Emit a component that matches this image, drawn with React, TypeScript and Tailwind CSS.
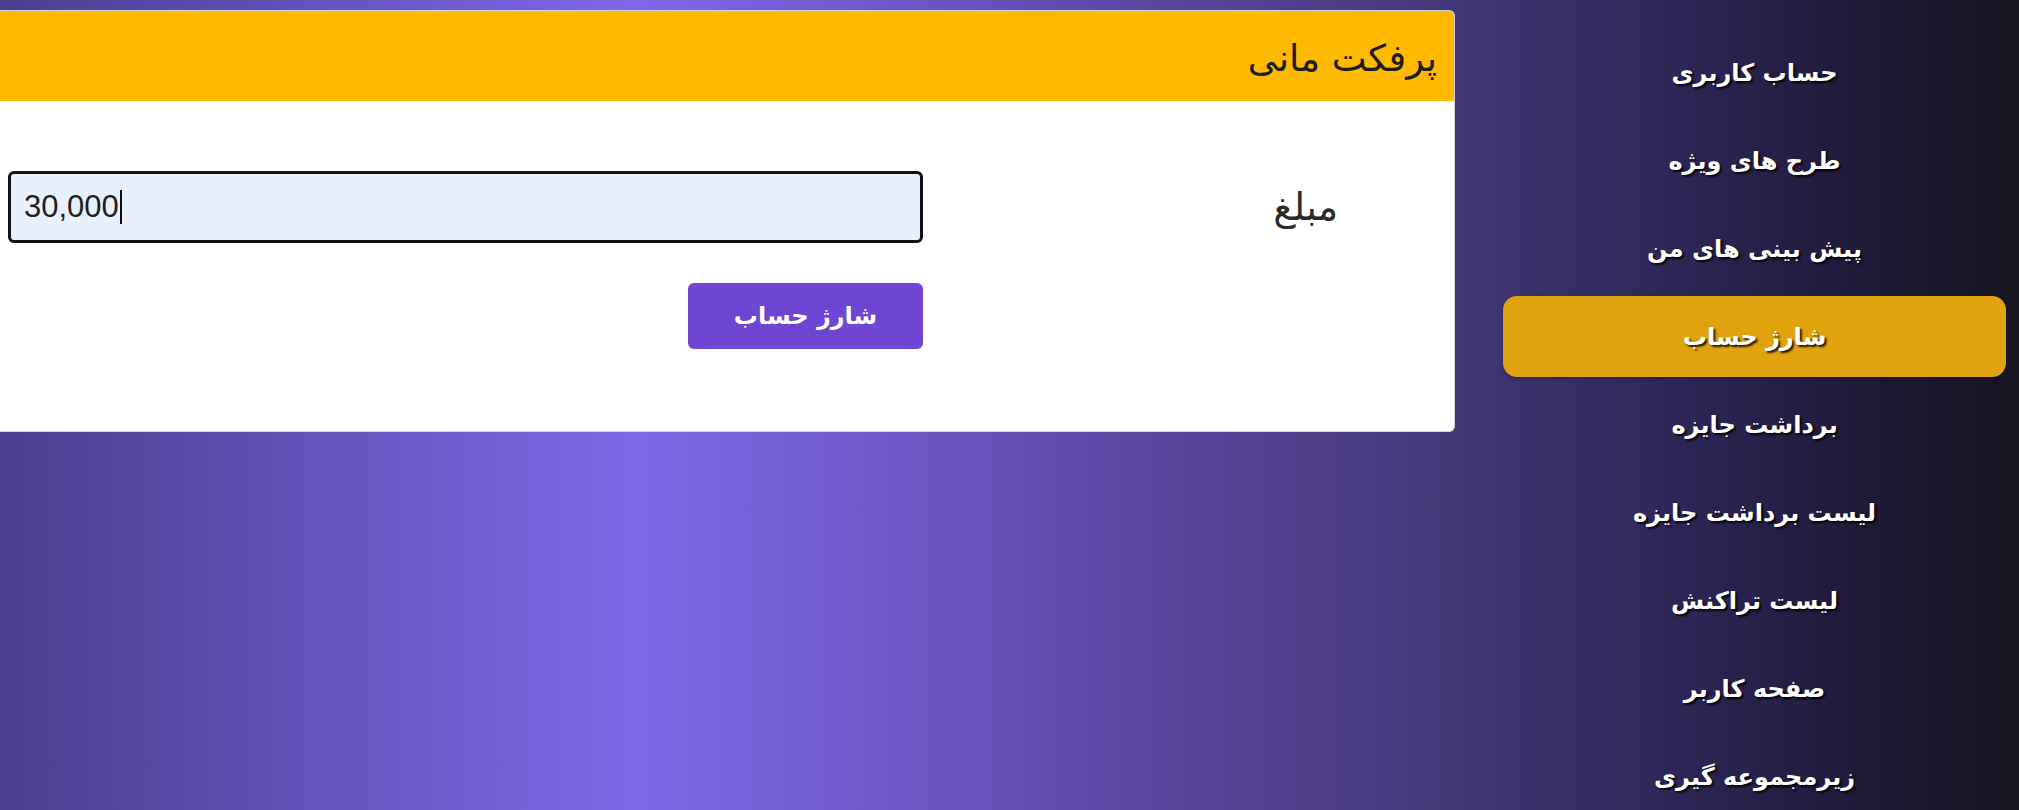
import { useState } from "react";

const menu = [
  "حساب کاربری",
  "طرح های ویژه",
  "پیش بینی های من",
  "شارژ حساب",
  "برداشت جایزه",
  "لیست برداشت جایزه",
  "لیست تراکنش",
  "صفحه کاربر",
  "زیرمجموعه گیری",
];

export default function App() {
  const [active] = useState("شارژ حساب");

  return (
    <div
      dir="ltr"
      className="flex min-h-screen w-full bg-[linear-gradient(to_right,#4b3e8f_0%,#7e68e8_31.4%,#6a54c0_47%,#5a459d_58%,#463a7c_70%,#30275a_82%,#1d1936_93%,#16141f_100%)] font-['DejaVu_Sans',sans-serif]"
    >
      {/* Main */}
      <main className="w-[1455px] shrink-0 pt-[10px]">
        <div dir="rtl" className="overflow-hidden rounded-r-[6px] border border-l-0 border-[#d4d4dc] bg-white">
          <div className="flex h-[90px] items-center bg-[#ffb900] pr-[17px] pt-[6px] text-[37px] text-[#1e1e1e]">
            پرفکت مانی
          </div>

          <div className="flex h-[330px] flex-col pt-[70px]">
            <div className="flex items-center">
              <label className="w-[531px] shrink-0 pr-[116px] text-right text-[38px] text-[#2a2a2a]">
                مبلغ
              </label>
              <div
                dir="ltr"
                className="flex h-[72px] w-[915px] items-center rounded-[6px] border-[3px] border-[#111] bg-[#e8f0fe] pl-[13px] font-['Liberation_Sans',Arial,sans-serif] text-[31px] text-[#1f1f1f]"
              >
                <span>30,000</span>
                <span className="ml-[1px] inline-block h-[34px] w-[2px] bg-[#111]" />
              </div>
            </div>

            <div className="mt-[40px] flex pr-[531px]">
              <button className="h-[66px] w-[235px] rounded-[6px] bg-[#6f45d3] text-[24px] font-bold text-white">
                شارژ حساب
              </button>
            </div>
          </div>
        </div>
      </main>

      {/* Sidebar */}
      <aside dir="rtl" className="flex flex-1 flex-col gap-[7px] pl-[48px] pr-[13px] pt-[32px]">
        {menu.map((item) => (
          <a
            key={item}
            href="#"
            className={`flex h-[81px] items-center justify-center rounded-[14px] text-[24px] font-bold text-white [text-shadow:2px_2px_2px_rgba(0,0,0,0.85)] ${
              item === active ? "bg-[#e0a30d] shadow-[0_1px_3px_rgba(0,0,0,0.4)]" : ""
            }`}
          >
            {item}
          </a>
        ))}
      </aside>
    </div>
  );
}
